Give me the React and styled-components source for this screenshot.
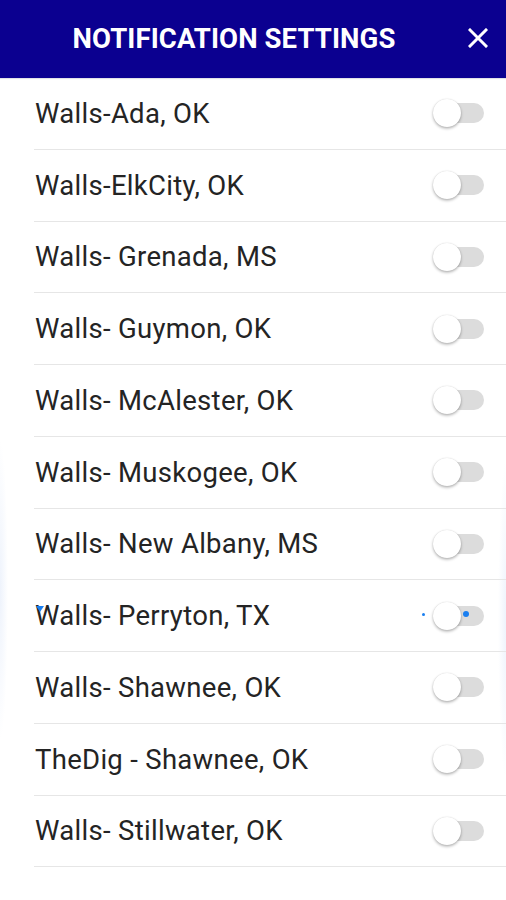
import React from "react";
import styled, { createGlobalStyle } from "styled-components";

const Global = createGlobalStyle`
  html, body { margin: 0; padding: 0; background: #fff; }
  body { font-family: Roboto, "Noto Sans", "Liberation Sans", sans-serif; }
  * { box-sizing: border-box; }
`;

const Page = styled.div`
  width: 506px;
  height: 900px;
  overflow: hidden;
  background:
    radial-gradient(8px 150px at 0px 590px, #eef3fc 0%, rgba(238, 243, 252, 0) 100%),
    radial-gradient(8px 160px at 506px 620px, #eef3fc 0%, rgba(238, 243, 252, 0) 100%),
    #fff;
`;

const Header = styled.header`
  height: 78px;
  background: #0b0090;
  display: flex;
  align-items: center;
  padding: 0 18px 2px 0;
  box-shadow: 0 1px 1px rgba(0, 0, 60, 0.12);
`;

const Title = styled.h1`
  flex: 1;
  margin: 0;
  text-align: center;
  color: #fff;
  font-family: Roboto, "Liberation Sans", sans-serif;
  font-weight: 700;
  font-size: 27.5px;
  letter-spacing: 0.1px;
`;

const Close = styled.button`
  width: 20px;
  height: 20px;
  padding: 0;
  border: 0;
  background: none;
  display: flex;
  align-items: center;
  justify-content: center;
`;

const List = styled.ul`
  list-style: none;
  margin: 0 0 0 34px;
  padding: 0;
`;

const Row = styled.li`
  position: relative;
  height: 71.75px;
  border-bottom: 1.5px solid #e6e6e6;
  display: flex;
  align-items: center;
  justify-content: space-between;
  padding: 0 22px 0 1px;
`;

const Label = styled.span`
  font-family: Roboto, "Liberation Sans", sans-serif;
  font-size: 27.5px;
  letter-spacing: 0.3px;
  color: #242424;
`;

const Switch = styled.span`
  position: relative;
  width: 50px;
  height: 28px;
  display: flex;
  align-items: center;
  &::before {
    content: "";
    position: absolute;
    left: 4px;
    right: 0;
    top: 4px;
    height: 20px;
    border-radius: 10px;
    background: #dcdcdc;
  }
`;

const Thumb = styled.span`
  position: relative;
  margin-left: -1px;
  width: 28px;
  height: 28px;
  border-radius: 50%;
  background: #fff;
  box-shadow: 0 1.5px 3px rgba(0, 0, 0, 0.3), 0 0 1px rgba(0, 0, 0, 0.15);
`;

const Dot = styled.span`
  position: absolute;
  left: ${(p) => p.$x}px;
  top: ${(p) => p.$y}px;
  width: ${(p) => p.$s}px;
  height: ${(p) => p.$s}px;
  border-radius: 50%;
  background: #1a7ff0;
`;

const Mark = styled.span`
  position: absolute;
  left: 2px;
  top: 26px;
  border-left: 4px solid transparent;
  border-right: 4px solid transparent;
  border-top: 6px solid #1a7ff0;
`;

const items = [
  "Walls-Ada, OK",
  "Walls-ElkCity, OK",
  "Walls- Grenada, MS",
  "Walls- Guymon, OK",
  "Walls- McAlester, OK",
  "Walls- Muskogee, OK",
  "Walls- New Albany, MS",
  "Walls- Perryton, TX",
  "Walls- Shawnee, OK",
  "TheDig - Shawnee, OK",
  "Walls- Stillwater, OK",
];

export default function App() {
  return (
    <Page>
      <Global />
      <Header>
        <Title>NOTIFICATION SETTINGS</Title>
        <Close aria-label="Close">
          <svg width="20" height="20" viewBox="0 0 20 20">
            <path d="M2 2 L18 18 M18 2 L2 18" stroke="#fff" strokeWidth="3" strokeLinecap="square" />
          </svg>
        </Close>
      </Header>
      <List>
        {items.map((t, i) => (
          <Row key={t}>
            {i === 7 && <Mark />}
            <Label>{t}</Label>
            <Switch>
              {i === 7 && <Dot $x={-12} $y={11} $s={3} />}
              <Thumb />
              {i === 7 && <Dot $x={29} $y={9} $s={6} />}
            </Switch>
          </Row>
        ))}
      </List>
    </Page>
  );
}
